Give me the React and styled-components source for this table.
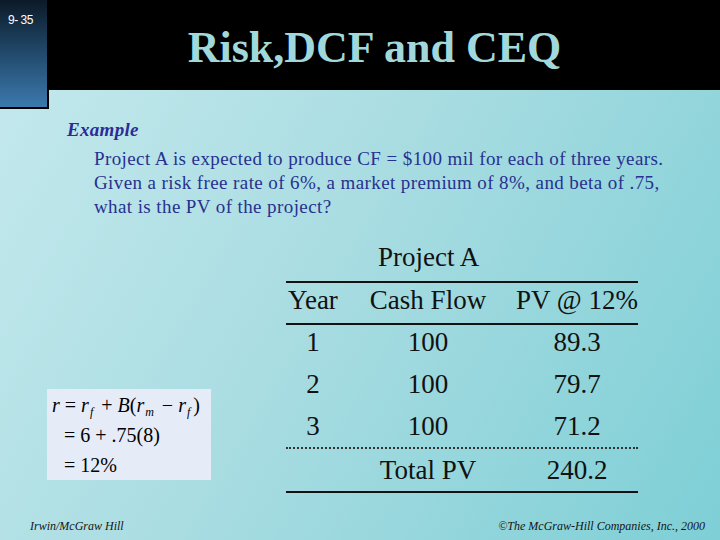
import React from "react";
import styled, { createGlobalStyle } from "styled-components";

const Global = createGlobalStyle`
  html, body {
    margin: 0;
    padding: 0;
  }
  body {
    background: #000;
  }
`;

const Slide = styled.div`
  width: 720px;
  height: 540px;
  overflow: hidden;
  display: flex;
  flex-direction: column;
  font-family: "Liberation Serif", "Times New Roman", serif;
  background: linear-gradient(120deg, #c6eaee 0%, #aadde2 45%, #7ecfd6 100%);
`;

const Header = styled.header`
  height: 90px;
  flex-shrink: 0;
  display: flex;
  align-items: flex-start;
  background: #000;
`;

const Tab = styled.div`
  position: relative;
  z-index: 1;
  box-sizing: border-box;
  width: 49px;
  height: 109px;
  flex-shrink: 0;
  border-right: 2px solid #000;
  border-bottom: 2px solid #000;
  background: linear-gradient(180deg, #0c1a27 0%, #1f4566 45%, #3b79ad 100%);
  padding: 13px 0 0 8px;
`;

const PageNo = styled.span`
  display: block;
  font-family: "Liberation Sans", Arial, sans-serif;
  font-size: 12px;
  color: #fff;
  letter-spacing: -0.5px;
`;

const Title = styled.h1`
  flex: 1;
  margin: 0;
  padding: 26px 20px 0 0;
  text-align: center;
  font-size: 44px;
  line-height: 44px;
  font-weight: bold;
  color: #a0d8dc;
`;

const Content = styled.main`
  display: flex;
  flex-direction: column;
  padding-left: 67px;
  color: #27318f;
`;

const Lead = styled.div`
  margin-top: 28px;
  font-size: 19px;
  line-height: 24px;
  letter-spacing: 0.3px;
  font-weight: bold;
  font-style: italic;
  color: #2b2c98;
`;

const Question = styled.p`
  margin: 5px 0 0 27px;
  font-size: 19px;
  line-height: 24px;
  letter-spacing: 0.4px;
  white-space: nowrap;
`;

const Lower = styled.section`
  display: flex;
  align-items: flex-end;
  gap: 75px;
  margin: 21px 0 0 -20px;
`;

const FormulaBox = styled.div`
  box-sizing: border-box;
  width: 164px;
  height: 91px;
  padding: 1px 0 0 5px;
  margin-bottom: 13px;
  background: #e6ebf8;
  color: #000;
  font-size: 20px;
`;

const FormulaLine = styled.div`
  line-height: 30px;
  white-space: nowrap;
  padding-left: ${(p) => (p.$indent ? "12px" : "0")};
  sub {
    font-size: 12px;
    font-style: italic;
    vertical-align: -4px;
    line-height: 0;
    margin: 0 3px 0 1px;
  }
`;

const Op = styled.span`
  margin: 0 5px;
`;

const Table = styled.div`
  width: 352px;
  color: #111;
  font-size: 27px;
`;

const Caption = styled.div`
  height: 34px;
  line-height: 34px;
  margin-bottom: 7px;
  padding-left: 92px;
`;

const Grid = styled.div`
  display: grid;
  grid-template-columns: 54px 176px 122px;
  text-align: center;
  border-top: 2px solid #111;
  border-bottom: 2px solid #111;
`;

const HeadRow = styled.div`
  display: contents;
  & > div {
    height: 34px;
    line-height: 34px;
    padding-bottom: 6px;
    border-bottom: 2px solid #111;
    white-space: nowrap;
  }
`;

const Body = styled.div`
  grid-column: 1 / -1;
  display: grid;
  grid-template-columns: 54px 176px 122px;
  row-gap: 6px;
  padding-bottom: 2px;
  border-bottom: 2px dotted #333;
`;

const Cell = styled.div`
  height: 36px;
  line-height: 34px;
`;

const TotalRow = styled.div`
  grid-column: 1 / -1;
  display: grid;
  grid-template-columns: 54px 176px 122px;
  & > div {
    height: 42px;
    line-height: 42px;
  }
`;

const Footer = styled.footer`
  margin-top: auto;
  display: flex;
  justify-content: space-between;
  padding: 0 15px 6px 30px;
  font-size: 12px;
  line-height: 16px;
  font-style: italic;
  color: #151515;
`;

const rows = [
  ["1", "100", "89.3"],
  ["2", "100", "79.7"],
  ["3", "100", "71.2"],
];

export default function App() {
  return (
    <Slide>
      <Global />
      <Header>
        <Tab>
          <PageNo>9- 35</PageNo>
        </Tab>
        <Title>Risk,DCF and CEQ</Title>
      </Header>
      <Content>
        <Lead>Example</Lead>
        <Question>
          Project A is expected to produce CF = $100 mil for each of three years.
          <br />
          Given a risk free rate of 6%, a market premium of 8%, and beta of .75,
          <br />
          what is the PV of the project?
        </Question>
        <Lower>
          <FormulaBox>
            <FormulaLine>
              <i>r</i>
              <Op>=</Op>
              <i>r</i>
              <sub>f</sub>
              <Op>+</Op>
              <i>B</i>(<i>r</i>
              <sub>m</sub>
              <Op>−</Op>
              <i>r</i>
              <sub>f</sub>)
            </FormulaLine>
            <FormulaLine $indent>= 6 + .75(8)</FormulaLine>
            <FormulaLine $indent>= 12%</FormulaLine>
          </FormulaBox>
          <Table>
            <Caption>Project A</Caption>
            <Grid>
              <HeadRow>
                <div>Year</div>
                <div>Cash Flow</div>
                <div>PV @ 12%</div>
              </HeadRow>
              <Body>
                {rows.map((r) =>
                  r.map((v, i) => <Cell key={r[0] + i}>{v}</Cell>)
                )}
              </Body>
              <TotalRow>
                <div />
                <div>Total PV</div>
                <div>240.2</div>
              </TotalRow>
            </Grid>
          </Table>
        </Lower>
      </Content>
      <Footer>
        <span>Irwin/McGraw Hill</span>
        <span>©The McGraw-Hill Companies, Inc., 2000</span>
      </Footer>
    </Slide>
  );
}
